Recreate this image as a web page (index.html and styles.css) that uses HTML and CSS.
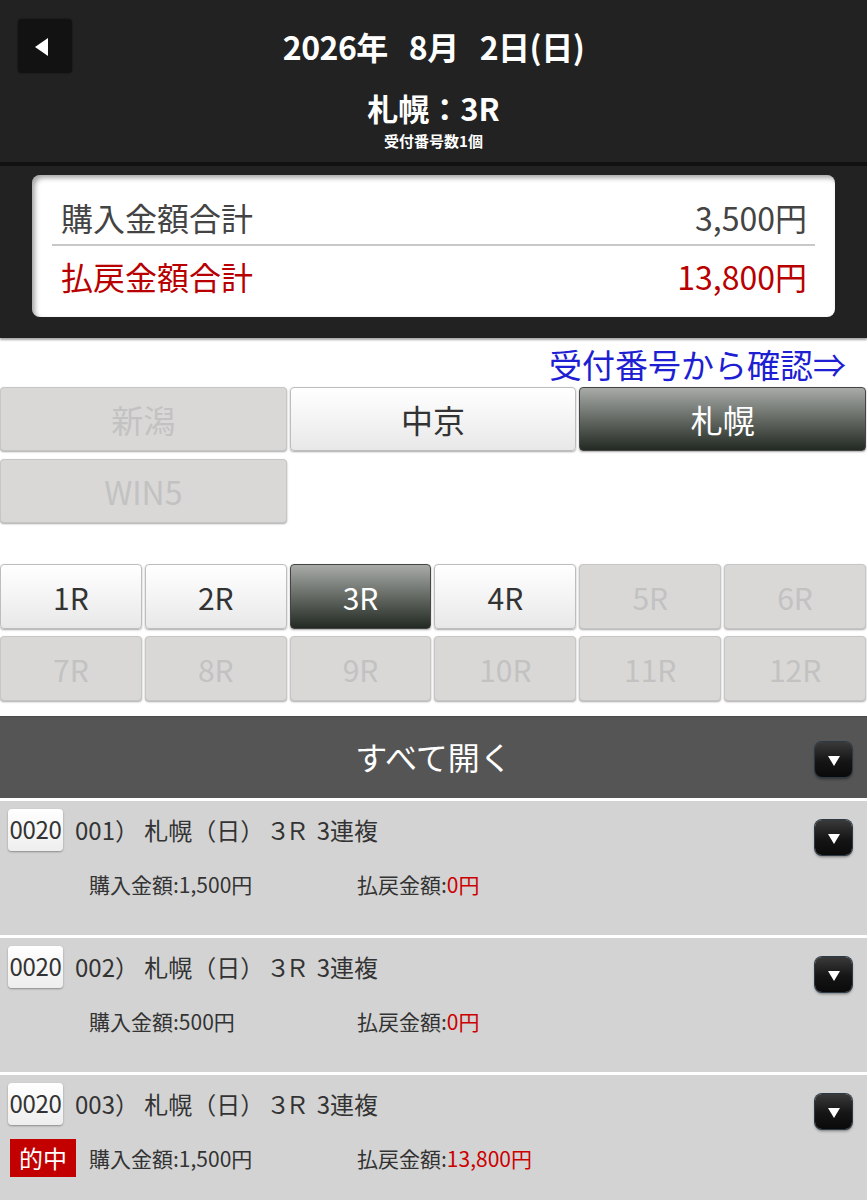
FILE: index.html
```html
<!DOCTYPE html>
<html lang="ja">
<head>
<meta charset="utf-8">
<title>札幌：3R</title>
<link rel="stylesheet" href="styles.css">
</head>
<body>
<div class="page">
  <header class="top">
    <div class="date-row">
      <div class="back-cell"><button class="back" aria-label="戻る"><svg viewBox="0 0 20 20" width="20" height="20"><polygon points="15,1 15,19 2,10" fill="#fff"/></svg></button></div>
      <div class="date"><span>2026年</span><span>8月</span><span>2日(日)</span></div>
      <div></div>
    </div>
    <div class="title">札幌：3R</div>
    <div class="subtitle">受付番号数1個</div>
  </header>

  <section class="summary">
    <div class="card">
      <div class="sum-row"><span>購入金額合計</span><span>3,500円</span></div>
      <div class="sum-row red"><span>払戻金額合計</span><span>13,800円</span></div>
    </div>
  </section>

  <div class="link-row"><a class="link" href="#">受付番号から確認⇒</a></div>

  <div class="venues">
    <div class="btn disabled">新潟</div>
    <div class="btn">中京</div>
    <div class="btn selected">札幌</div>
    <div class="btn disabled">WIN5</div>
  </div>

  <div class="races">
    <div class="btn race">1R</div>
    <div class="btn race">2R</div>
    <div class="btn race selected">3R</div>
    <div class="btn race">4R</div>
    <div class="btn race disabled">5R</div>
    <div class="btn race disabled">6R</div>
    <div class="btn race disabled">7R</div>
    <div class="btn race disabled">8R</div>
    <div class="btn race disabled">9R</div>
    <div class="btn race disabled">10R</div>
    <div class="btn race disabled">11R</div>
    <div class="btn race disabled">12R</div>
  </div>

  <div class="openall">
    <span class="openall-text">すべて開く</span>
    <span class="dd"><svg viewBox="0 0 16 16" width="16" height="16"><polygon points="2,4 14,4 8,14" fill="#fff"/></svg></span>
  </div>

  <div class="items">
    <div class="item">
      <div class="item-head">
        <span class="code">0020</span>
        <span class="item-title">001） 札幌（日）<span class="rn">３Ｒ</span> 3連複</span>
        <span class="dd"><svg viewBox="0 0 16 16" width="16" height="16"><polygon points="2,4 14,4 8,14" fill="#fff"/></svg></span>
      </div>
      <div class="item-body">
        <span class="badge-slot"></span>
        <span class="buy">購入金額:1,500円</span>
        <span class="pay">払戻金額:<em>0円</em></span>
      </div>
    </div>
    <div class="item">
      <div class="item-head">
        <span class="code">0020</span>
        <span class="item-title">002） 札幌（日）<span class="rn">３Ｒ</span> 3連複</span>
        <span class="dd"><svg viewBox="0 0 16 16" width="16" height="16"><polygon points="2,4 14,4 8,14" fill="#fff"/></svg></span>
      </div>
      <div class="item-body">
        <span class="badge-slot"></span>
        <span class="buy">購入金額:500円</span>
        <span class="pay">払戻金額:<em>0円</em></span>
      </div>
    </div>
    <div class="item">
      <div class="item-head">
        <span class="code">0020</span>
        <span class="item-title">003） 札幌（日）<span class="rn">３Ｒ</span> 3連複</span>
        <span class="dd"><svg viewBox="0 0 16 16" width="16" height="16"><polygon points="2,4 14,4 8,14" fill="#fff"/></svg></span>
      </div>
      <div class="item-body">
        <span class="badge-slot"><span class="badge">的中</span></span>
        <span class="buy">購入金額:1,500円</span>
        <span class="pay">払戻金額:<em>13,800円</em></span>
      </div>
    </div>
  </div>
</div>
</body>
</html>
```

FILE: styles.css
```css
* { box-sizing: border-box; }
html, body { margin: 0; padding: 0; background: #fff; }
body {
  font-family: "Noto Sans CJK JP", "Noto Sans", sans-serif;
  color: #333;
}
.page { width: 867px; overflow: hidden; }

/* header */
.top {
  background: #222;
  color: #fff;
  padding: 19px 0 11px;
  border-bottom: 4px solid #111;
  text-align: center;
}
.date-row {
  display: grid;
  grid-template-columns: 1fr auto 1fr;
  align-items: center;
  height: 54px;
}
.back-cell { display: flex; padding-left: 18px; }
.back {
  width: 54px; height: 54px;
  border: 0; border-radius: 4px;
  background: #121212;
  box-shadow: 0 0 2px rgba(0,0,0,.6);
  display: flex; align-items: center; justify-content: center;
  padding: 2px 4px 0 0;
}
.date {
  display: flex; gap: 21px;
  font-size: 32px; font-weight: 700;
  line-height: 40px;
  letter-spacing: -0.5px;
}
.title {
  margin-top: 17px;
  font-size: 31px; font-weight: 700;
  line-height: 36px;
}
.subtitle {
  margin-top: 5px;
  font-size: 15px; font-weight: 700;
  line-height: 20px;
}

/* summary */
.summary {
  background: #222;
  padding: 9px 32px 21px;
  box-shadow: 0 2px 2px rgba(0,0,0,.35);
  position: relative;
}
.card {
  background: #fff;
  border-radius: 8px;
  padding: 10px 20px 11px;
  box-shadow: inset 3px 3px 5px rgba(0,0,0,.35);
}
.sum-row {
  display: flex; justify-content: space-between; align-items: center;
  height: 60px;
  padding: 0 8px 0 9px;
  font-size: 32px;
  color: #444;
  line-height: 1;
}
.sum-row:first-child { border-bottom: 2px solid #c8c8c8; height: 61px; padding-top: 4px; }
.sum-row.red { color: #b80000; }

/* link */
.link-row {
  text-align: right;
  padding: 6px 21px 0 0;
  height: 49px;
}
.link {
  color: #1e1ed2;
  text-decoration: none;
  font-size: 33px;
  line-height: 41px;
}

/* buttons */
.btn {
  display: flex; align-items: center; justify-content: center;
  border-radius: 4px;
  border: 1px solid #bdbdbd;
  background: linear-gradient(#ffffff, #f4f4f4 50%, #e8e8e8);
  box-shadow: 0 1px 2px rgba(0,0,0,.35);
  color: #333;
  font-size: 32px;
}
.btn.disabled {
  background: #d9d8d6;
  border-color: #c6c6c6;
  color: #c2c2c2;
}
.btn.selected {
  background: linear-gradient(#a8aba8, #6b706b 45%, #232923);
  border-color: #444;
  color: #fff;
}
.venues {
  display: grid;
  grid-template-columns: repeat(3, 1fr);
  column-gap: 3px; row-gap: 8px;
  grid-auto-rows: 64px;
  padding-right: 1px;
}
.races {
  margin-top: 41px;
  display: grid;
  grid-template-columns: repeat(6, 1fr);
  column-gap: 3px; row-gap: 7px;
  grid-auto-rows: 65px;
  padding-right: 1px;
}
.btn.race { font-size: 30px; }

/* open all bar */
.openall {
  margin-top: 15px;
  height: 82px;
  background: #555;
  border-top: 1px solid #4a4a4a;
  display: flex; align-items: center; justify-content: center;
  position: relative;
  color: #fff;
  font-size: 32px;
  padding-bottom: 4px;
}
.openall .dd { position: absolute; right: 15px; top: 25px; }
.dd {
  width: 37px; height: 35px;
  border-radius: 7px;
  background: linear-gradient(#3a3a3a, #151515 55%, #0a0a0a);
  box-shadow: 0 0 0 1px #2c3a48, 0 2px 3px rgba(0,0,0,.45);
  display: flex; align-items: center; justify-content: center;
}

/* items */
.items {
  display: flex; flex-direction: column; gap: 3px;
  background: #fff;
  padding-top: 3px;
}
.item {
  background: #d3d3d3;
  height: 134px;
  padding: 8px 0 0 0;
}
.item-head {
  display: flex; align-items: flex-start;
  height: 42px;
  padding-left: 8px;
}
.code {
  width: 55px; height: 42px;
  border-radius: 4px;
  background: linear-gradient(#ffffff, #eeeeee);
  box-shadow: 0 1px 2px rgba(0,0,0,.35);
  font-size: 24px; line-height: 40px;
  text-align: center;
  color: #333;
  letter-spacing: -0.3px;
}
.item-title {
  margin-left: 12px;
  font-size: 24px;
  line-height: 42px;
  color: #333;
  flex: 1;
}
.rn { letter-spacing: -5px; margin-left: 2px; margin-right: 7px; }
.item-head .dd { margin: 11px 15px 0 0; }
.item-body {
  display: flex; align-items: center;
  margin-top: 14px;
  height: 38px;
  padding-left: 10px;
  font-size: 21px;
  color: #333;
}
.badge-slot { width: 79px; display: flex; }
.badge {
  width: 66px; height: 38px;
  background: #c20000;
  color: #fff;
  font-size: 24px;
  line-height: 38px;
  text-align: center;
}
.buy { width: 268px; }
.pay em { font-style: normal; color: #cc0000; }
```
